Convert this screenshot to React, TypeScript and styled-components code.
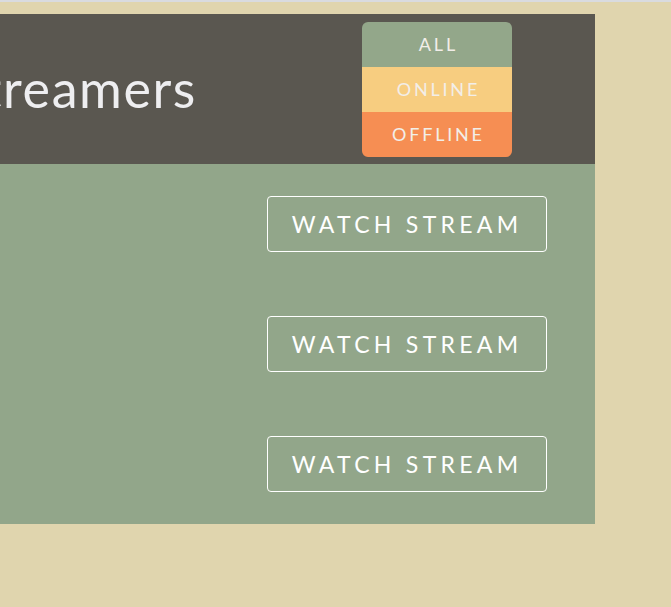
import React from "react";
import styled, { createGlobalStyle } from "styled-components";

const Global = createGlobalStyle`
  html, body {
    margin: 0;
    padding: 0;
    overflow: hidden;
  }
  body {
    background: #e0d5ae;
    font-family: Lato, "Open Sans", sans-serif;
  }
`;

const TopStrip = styled.div`
  height: 2px;
  background: #d9dbdf;
`;

const Page = styled.div`
  padding-top: 12px;
`;

const Container = styled.div`
  width: 1000px;
  margin-left: -405px;
`;

const Header = styled.header`
  height: 150px;
  background: #5a5750;
  display: flex;
  align-items: center;
  padding-right: 83px;
`;

const Title = styled.h1`
  width: 602px;
  flex-shrink: 0;
  margin: -2px 0 0;
  text-align: right;
  white-space: nowrap;
  font-size: 52px;
  font-weight: 400;
  color: #eeeef0;
  letter-spacing: 1.6px;
`;

const Filter = styled.nav`
  margin-left: auto;
  width: 150px;
  border-radius: 6px;
  overflow: hidden;
  display: flex;
  flex-direction: column;
`;

const FilterItem = styled.div<{ $bg: string }>`
  height: 45px;
  display: flex;
  align-items: center;
  justify-content: center;
  padding-left: 2.8px;
  background: ${(p) => p.$bg};
  color: #f2eee9;
  font-size: 18px;
  letter-spacing: 2.8px;
`;

const List = styled.main`
  background: #92a68a;
`;

const Row = styled.div`
  height: 120px;
  display: flex;
  align-items: center;
  justify-content: flex-end;
  padding-right: 48px;
`;

const WatchButton = styled.button`
  width: 280px;
  height: 56px;
  padding: 0;
  background: transparent;
  border: 1px solid #ffffff;
  border-radius: 4px;
  color: #ffffff;
  font-family: Lato, "Open Sans", sans-serif;
  font-size: 23px;
  letter-spacing: 4.3px;
  cursor: pointer;
`;

const filters = [
  { label: "ALL", bg: "#93a78a" },
  { label: "ONLINE", bg: "#f7cd80" },
  { label: "OFFLINE", bg: "#f68e53" },
];

export default function App() {
  return (
    <>
      <Global />
      <TopStrip />
      <Page>
        <Container>
          <Header>
            <Title>Twitch Streamers</Title>
            <Filter>
              {filters.map((f) => (
                <FilterItem key={f.label} $bg={f.bg}>
                  {f.label}
                </FilterItem>
              ))}
            </Filter>
          </Header>
          <List>
            {[0, 1, 2].map((i) => (
              <Row key={i}>
                <WatchButton>WATCH STREAM</WatchButton>
              </Row>
            ))}
          </List>
        </Container>
      </Page>
    </>
  );
}
